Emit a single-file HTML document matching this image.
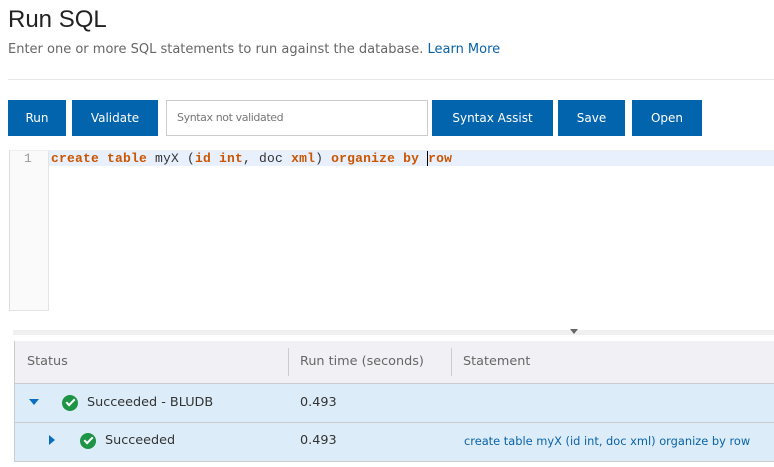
<!DOCTYPE html>
<html><head><style>
body{margin:0;width:774px;height:467px;overflow:hidden;background:#fff;font-family:"DejaVu Sans",sans-serif;position:relative}
.a{position:absolute}
.btn{position:absolute;top:100px;height:36px;background:#0364ae;color:#fff;font-size:12px;line-height:36px;text-align:center}
.code{font-family:"Liberation Mono",monospace;font-size:13px;letter-spacing:.2px}
.k{color:#cc5500;font-weight:bold}
.chk{position:absolute;width:16px;height:16px;border-radius:50%;background:#1e9447}
.chk:after{content:"";position:absolute;left:4px;top:4px;width:7px;height:3px;border-left:2px solid #fff;border-bottom:2px solid #fff;transform:rotate(-45deg)}
.t{font-size:12.8px}
</style></head><body>
<div class="a" style="left:8px;top:6px;font-size:24px;color:#222;font-family:'Liberation Sans',sans-serif">Run SQL</div>
<div class="a" style="left:8px;top:42px;font-size:13px;color:#666">Enter one or more SQL statements to run against the database. <span style="color:#0a62a8">Learn More</span></div>
<div class="a" style="left:8px;top:79px;width:766px;height:1px;background:#e6e6e6"></div>
<div class="btn" style="left:8px;width:58px">Run</div>
<div class="btn" style="left:72px;width:86px">Validate</div>
<div class="a" style="left:166px;top:100px;width:260px;height:34px;border:1px solid #ccc;font-size:11px;color:#777;line-height:34px;text-indent:10px;letter-spacing:-.4px">Syntax not validated</div>
<div class="btn" style="left:432px;width:121px">Syntax Assist</div>
<div class="btn" style="left:558px;width:67px">Save</div>
<div class="btn" style="left:632px;width:70px">Open</div>
<div class="a" style="left:9px;top:150px;width:765px;height:160px;border-left:1px solid #ddd;border-top:1px solid #eee"></div>
<div class="a" style="left:10px;top:151px;width:38px;height:159px;background:#fafafa;border-right:1px solid #e4e4e4;border-bottom:1px solid #e4e4e4"></div>
<div class="a" style="left:49px;top:151px;width:725px;height:15px;background:#e8f0fd"></div>
<div class="a code" style="left:24px;top:151px;color:#999">1</div>
<div class="a code" style="left:51px;top:151px;color:#333"><span class="k">create table</span> myX (<span class="k">id int</span>, doc <span class="k">xml</span>) <span class="k">organize by</span> <span style="border-left:1px solid #000"></span><span class="k">row</span></div>
<div class="a" style="left:13px;top:330px;width:761px;height:5px;background:#f0f0f0"></div>
<div class="a" style="left:570px;top:329px;width:0;height:0;border-left:4px solid transparent;border-right:4px solid transparent;border-top:5px solid #666"></div>
<div class="a" style="left:14px;top:341px;width:760px;height:42px;background:#f1f0f4;border-left:1px solid #ccc;border-bottom:1px solid #ccc"></div>
<div class="a" style="left:14px;top:384px;width:760px;height:38px;background:#dcedf9;border-left:1px solid #ccc;border-bottom:1px solid #ccc"></div>
<div class="a" style="left:14px;top:423px;width:760px;height:38px;background:#dcedf9;border-left:1px solid #ccc;border-bottom:1px solid #ccc"></div>
<div class="a" style="left:288px;top:348px;width:1px;height:28px;background:#ccc"></div>
<div class="a" style="left:451px;top:348px;width:1px;height:28px;background:#ccc"></div>
<div class="a t" style="left:27px;top:354px;color:#666">Status</div>
<div class="a t" style="left:300px;top:354px;color:#666">Run time (seconds)</div>
<div class="a t" style="left:463px;top:354px;color:#666">Statement</div>
<div class="a" style="left:29px;top:399px;border-left:5px solid transparent;border-right:5px solid transparent;border-top:6px solid #0a6fc2"></div>
<div class="chk" style="left:62px;top:395px"></div>
<div class="a t" style="left:87px;top:395px;color:#333">Succeeded - BLUDB</div>
<div class="a t" style="left:300px;top:395px;color:#333">0.493</div>
<div class="a" style="left:49px;top:435px;border-top:5px solid transparent;border-bottom:5px solid transparent;border-left:6px solid #0a6fc2"></div>
<div class="chk" style="left:80px;top:433px"></div>
<div class="a t" style="left:105px;top:433px;color:#333">Succeeded</div>
<div class="a t" style="left:300px;top:433px;color:#333">0.493</div>
<div class="a" style="left:464px;top:434px;font-size:11.4px;color:#0a62a8">create table myX (id int, doc xml) organize by row</div>
</body></html>
